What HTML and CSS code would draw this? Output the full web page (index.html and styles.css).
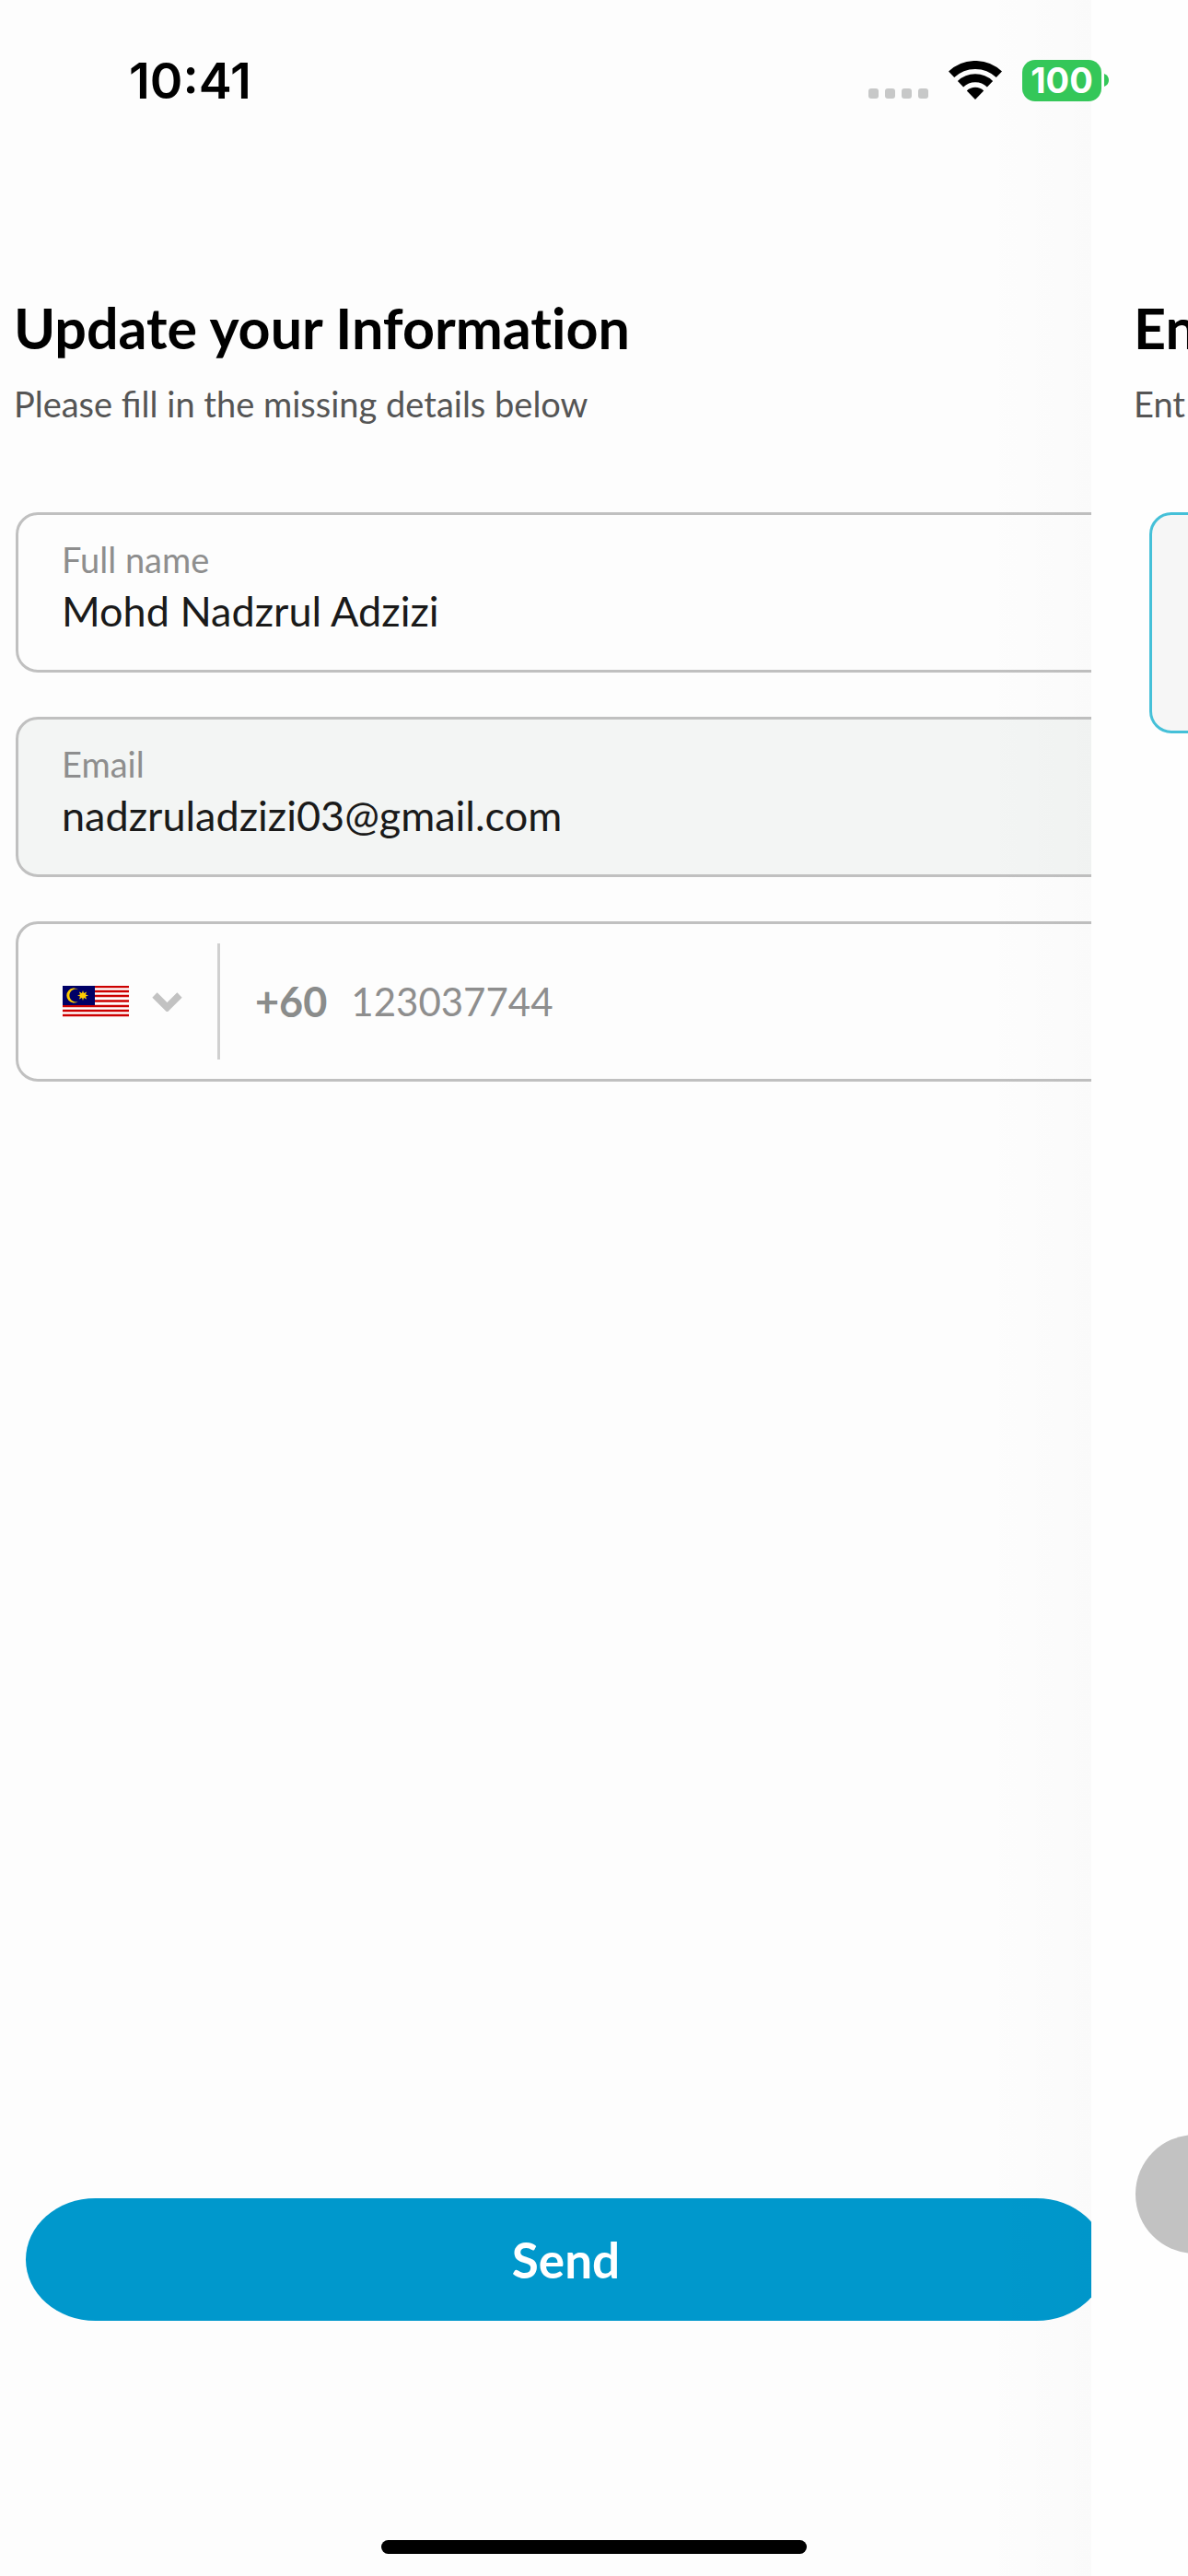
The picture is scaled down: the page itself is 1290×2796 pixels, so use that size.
FILE: index.html
```html
<!DOCTYPE html>
<html lang="en">
<head>
<meta charset="utf-8">
<meta name="viewport" content="width=device-width, initial-scale=1">
<title>Update your Information</title>
<link rel="stylesheet" href="styles.css">
</head>
<body>
<div class="screen">
  <header class="status">
    <time class="clock">10:41</time>
    <div class="indicators">
      <svg class="signal" viewBox="0 0 65 11" fill="#c7c8c8" aria-hidden="true">
        <rect x="0" width="11" height="11" rx="3"/><rect x="18" width="11" height="11" rx="3"/>
        <rect x="36" width="11" height="11" rx="3"/><rect x="54" width="11" height="11" rx="3"/>
      </svg>
      <svg class="wifi" viewBox="0 0 58 42" aria-hidden="true">
        <g fill="none" stroke="#000" stroke-width="9">
          <path d="M3.1 14.85A37.5 37.5 0 0 1 54.9 14.85"/>
          <path d="M13 25.2A23.2 23.2 0 0 1 45 25.2"/>
        </g>
        <path d="M29 42L19.8 32.4A13.3 13.3 0 0 1 38.2 32.4Z"/>
      </svg>
      <div class="battery">
        <span class="level">100</span>
        <svg class="nub" viewBox="0 0 5 14" aria-hidden="true"><path d="M0 0Q5 2 5 7T0 14Z" fill="#34c759"/></svg>
      </div>
    </div>
  </header>

  <main class="panel current">
    <div class="heading">
      <h1 class="title">Update your Information</h1>
      <p class="subtitle">Please fill in the missing details below</p>
    </div>
    <form class="form">
      <div class="field">
        <label class="label" for="name">Full name</label>
        <input class="value" id="name" type="text" value="Mohd Nadzrul Adzizi">
      </div>
      <div class="field locked">
        <label class="label" for="email">Email</label>
        <input class="value" id="email" type="email" value="nadzruladzizi03@gmail.com" readonly>
      </div>
      <div class="field phone">
        <button class="country" type="button" aria-label="Country">
          <svg class="flag" viewBox="0 0 72 34" aria-hidden="true">
            <rect width="72" height="34" fill="#fff"/>
            <path d="M0 1H72M0 6H72M0 11H72M0 16.500H72M0 22H72M0 27H72M0 32H72" stroke="#cc0000" stroke-width="2.300"/>
            <rect width="35" height="21" fill="#000066"/>
            <path d="M17 4A8 8 0 1 0 17 17A7 7 0 1 1 17 4Z" fill="#fc0"/>
            <path d="M22 5L23 8L26 6.500L25 9.500L28 10.500L25 11.500L26 14.500L23 13L22 16L21 13L18 14.500L19 11.500L16 10.500L19 9.500L18 6.500L21 8Z" fill="#fc0"/>
          </svg>
          <svg class="chevron" viewBox="0 0 33 21" aria-hidden="true"><path d="M3 3L16.500 16.500L30 3" fill="none" stroke="#c2c2c2" stroke-width="7.500"/></svg>
        </button>
        <label class="prefix" for="phone">+60</label>
        <input class="number" id="phone" type="tel" value="123037744">
      </div>
      <button class="send" type="submit">Send</button>
    </form>
  </main>

  <section class="panel next">
    <div class="heading">
      <h2 class="title">En</h2>
      <p class="subtitle">Ent</p>
    </div>
    <div class="code"></div>
    <button class="continue" type="button" aria-label="Continue"></button>
  </section>

  <div class="home"></div>
</div>
</body>
</html>
```
FILE: styles.css
```css
* { box-sizing: border-box; }

body {
  margin: 0;
  background: #fefefe;
  color: #000;
  font-family: Lato, "Open Sans", sans-serif;
}

button,
input {
  margin: 0;
  padding: 0;
  border: 0;
  background: none;
  font-family: inherit;
  outline: 0;
}

svg { display: block; flex: none; }

.screen {
  position: relative;
  display: flex;
  min-height: 100vh;
  overflow: hidden;
}

/* Status bar, laid over both panels */
.status {
  position: absolute;
  z-index: 2;
  top: 0;
  left: 0;
  right: 0;
  display: flex;
  justify-content: space-between;
  align-items: center;
  height: 174px;
  padding: 0 86px 0 140px;
  font-family: Inter, sans-serif;
}

.clock { padding-top: 2px; font-size: 54px; font-weight: 600; line-height: 64px; }
.indicators { display: flex; align-items: center; gap: 22px; }
.signal { width: 65px; height: 11px; margin-top: 29px; }
.wifi { width: 58px; height: 42px; }
.battery { display: flex; align-items: center; gap: 3px; }
.level {
  width: 86px;
  border-radius: 14px;
  background: #34c759;
  color: #fff;
  font-size: 38px;
  font-weight: 700;
  line-height: 45px;
  text-align: center;
}
.nub { width: 5px; height: 14px; }

/* Panels */
.panel {
  position: relative;
  display: flex;
  flex-direction: column;
  overflow: hidden;
  padding-top: 320px;
}
.current { flex: 1; min-width: 0; background: #fdfdfd; }
.current::after {
  content: "";
  position: absolute;
  inset: 0 0 0 auto;
  width: 120px;
  background: linear-gradient(to right, transparent, rgba(0, 0, 0, 0.012));
  pointer-events: none;
}
.next { flex: none; width: 105px; background: #fefefe; }

.heading { padding-left: 15px; margin-bottom: 94px; }
.title {
  margin: 0 0 22px;
  font-size: 61px;
  font-weight: 700;
  font-variant-ligatures: none;
  line-height: 72px;
  white-space: nowrap;
}
.subtitle {
  margin: 0;
  color: #555;
  font-size: 38px;
  line-height: 48px;
  white-space: nowrap;
}

/* Form */
.form {
  flex: 1;
  display: flex;
  flex-direction: column;
  gap: 48px;
  margin-right: -32px;
  padding: 0 0 277px 17px;
}
.field {
  display: flex;
  flex-direction: column;
  gap: 4px;
  height: 174px;
  padding: 24px 47px;
  border: 3px solid #c0c0c0;
  border-radius: 24px;
}
.locked { background: #f3f5f4; }
.label { color: #8e8e8e; font-size: 38px; line-height: 48px; }
.value { width: 100%; height: 56px; color: #1a1a1a; font-size: 45px; line-height: 56px; }

.phone { flex-direction: row; align-items: center; gap: 26px; padding: 0 48px; }
.country {
  display: flex;
  align-items: center;
  gap: 25px;
  height: 126px;
  margin-right: 12px;
  padding-right: 38px;
  border-right: 3px solid #d0d0d0;
}
.flag { width: 72px; height: 34px; }
.chevron { width: 33px; height: 21px; }
.prefix { color: #8a8c8b; font-size: 45px; font-weight: 700; line-height: 56px; }
.number { flex: 1; height: 56px; color: #8e8e8e; font-size: 42px; line-height: 56px; }

.send {
  height: 133px;
  margin: auto 16px 0 11px;
  border-radius: 76px / 67px;
  background: #0098cc;
  color: #fff;
  font-size: 53px;
  font-weight: 700;
}

/* Following step, peeking in from the right */
.next .heading { padding-left: 46px; }
.code {
  width: 400px;
  height: 240px;
  margin-left: 63px;
  border: 3px solid #45c0d8;
  border-radius: 24px;
  background: #f6f6f6;
}
.continue {
  width: 400px;
  height: 129px;
  margin: auto 0 350px 48px;
  border-radius: 65px;
  background: #c2c2c2;
}

.home {
  position: absolute;
  bottom: 24px;
  left: 50%;
  width: 462px;
  height: 15px;
  border-radius: 8px;
  background: #000;
  transform: translateX(-50%);
}
```
